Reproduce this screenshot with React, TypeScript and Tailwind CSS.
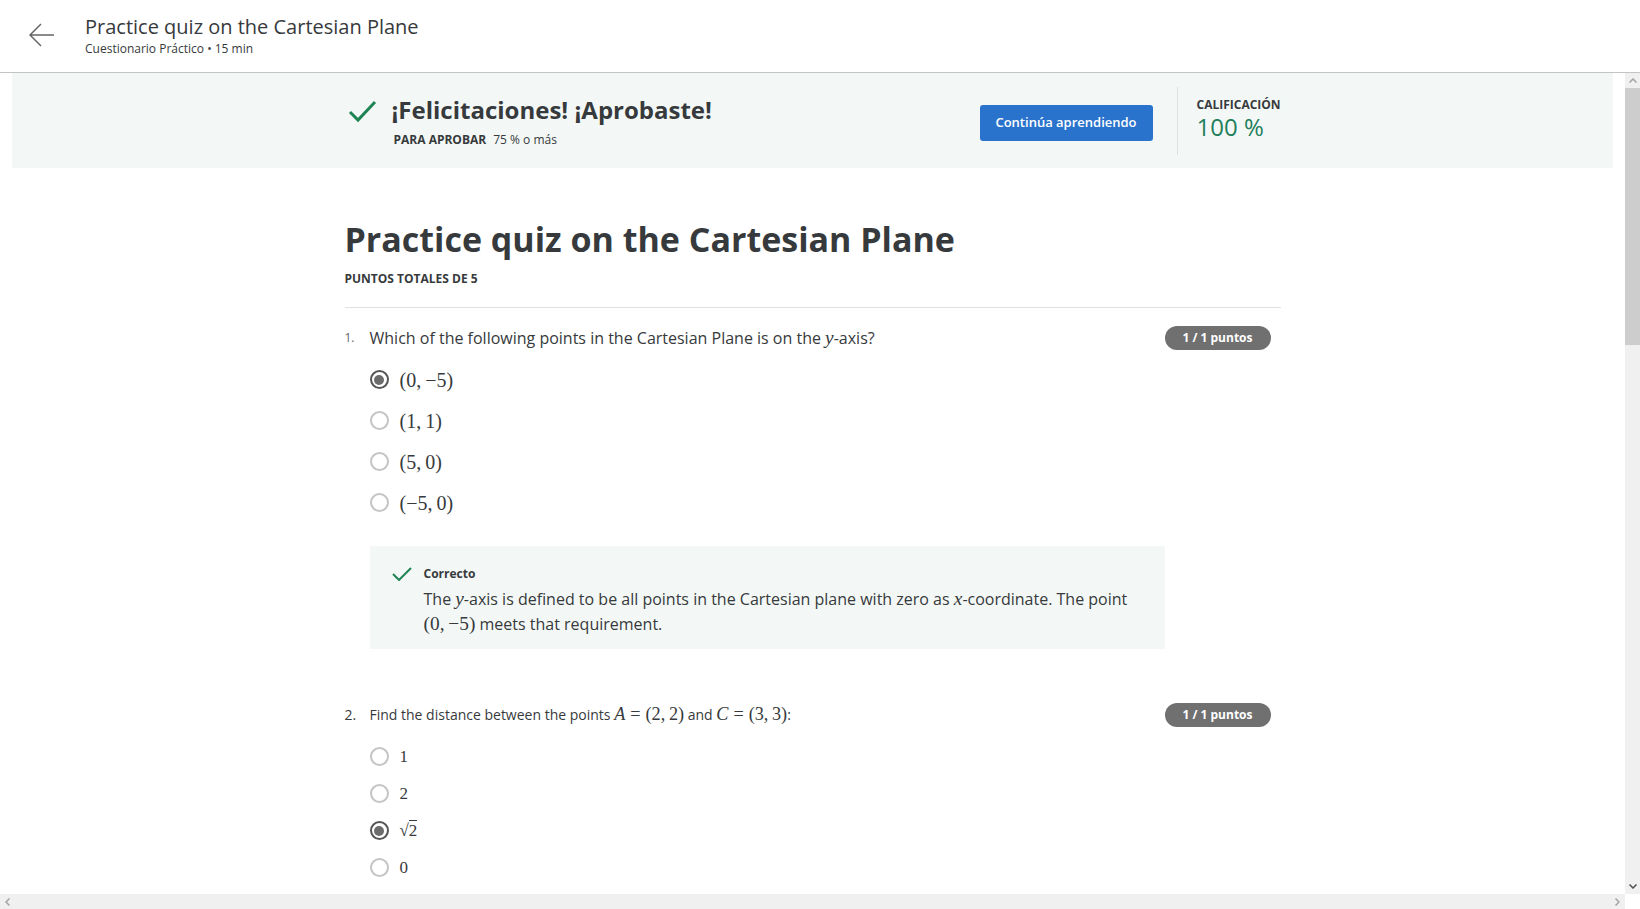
import React from 'react';

const serif = "font-['Liberation_Serif','Times_New_Roman',serif]";

function M({ children, big }: { children: React.ReactNode; big?: boolean }) {
  return <span className={`${serif} ${big ? 'text-[1.3em]' : 'text-[1.21em]'} leading-none`}>{children}</span>;
}

function Eq() {
  return <span className="mx-[5px]">=</span>;
}

function Check({ className }: { className?: string }) {
  return (
    <svg viewBox="0 0 29 24" className={className} fill="none">
      <polyline points="2,13 10,21 27,3" stroke="#1f8354" strokeWidth="3" />
    </svg>
  );
}

function Radio({ checked }: { checked?: boolean }) {
  if (checked) {
    return (
      <span className="w-[19px] h-[19px] rounded-full border-2 border-[#555] flex items-center justify-center shrink-0">
        <span className="w-[10px] h-[10px] rounded-full bg-[#6b6b6b]" />
      </span>
    );
  }
  return <span className="w-[19px] h-[19px] rounded-full border-2 border-[#c4c4c4] shrink-0" />;
}

function Badge() {
  return (
    <div className="w-[106px] h-6 rounded-full bg-[#707070] text-white text-[12px] font-bold flex items-center justify-center mr-[10px] shrink-0">
      1 / 1 puntos
    </div>
  );
}

export default function App() {
  const q1 = [
    { t: <>(0,&thinsp;−5)</>, c: true },
    { t: <>(1,&thinsp;1)</> },
    { t: <>(5,&thinsp;0)</> },
    { t: <>(−5,&thinsp;0)</> },
  ];
  const q2 = [
    { t: <>1</> },
    { t: <>2</> },
    { t: <>√<span className="border-t border-current">2</span></>, c: true },
    { t: <>0</> },
  ];

  return (
    <div className="w-[1640px] h-[909px] overflow-hidden bg-white flex flex-col font-['Open_Sans',sans-serif] text-[#373a3c]">
      <header className="h-[73px] shrink-0 border-b border-[#c4c4c4] flex items-start">
        <div className="pl-[29px] pt-[23px]">
          <svg viewBox="0 0 25 24" className="w-[25px] h-6" fill="none">
            <path d="M1 12H25M12 1L1 12L12 23" stroke="#666" strokeWidth="1.5" />
          </svg>
        </div>
        <div className="ml-[31px] pt-[14px]">
          <h1 className="text-[20px] leading-[26px]">Practice quiz on the Cartesian Plane</h1>
          <p className="text-[12px] leading-4 mt-px">Cuestionario Práctico • 15 min</p>
        </div>
      </header>

      <div className="flex flex-1 min-h-0">
        <main className="flex-1 min-w-0 overflow-hidden">
          <div className="mx-3 h-[95px] bg-[#f3f8f6]">
            <div className="w-[936px] mx-auto h-full flex items-center">
              <div className="flex-1 flex items-start">
                <Check className="w-[29px] h-6 ml-[3px] mt-[5px]" />
                <div className="ml-[15px]">
                  <div className="text-[24px] leading-8 font-bold">¡Felicitaciones! ¡Aprobaste!</div>
                  <div className="mt-1.5 ml-[2px] text-[12px] leading-4">
                    <span className="font-bold">PARA APROBAR</span>
                    <span className="ml-[7px]">75 % o más</span>
                  </div>
                </div>
              </div>
              <button className="w-[173px] h-9 mt-1 rounded-[3px] bg-[#2a73cc] text-white text-[13px] font-semibold">
                Continúa aprendiendo
              </button>
              <div className="ml-6 w-px h-[68px] bg-[#e0e0e0]" />
              <div className="ml-[19px] w-[84px] mb-[4px]">
                <div className="text-[12px] leading-4 font-bold">CALIFICACIÓN</div>
                <div className="text-[24px] leading-7 text-[#1f7f5c]">100 %</div>
              </div>
            </div>
          </div>

          <div className="w-[936px] mx-auto">
            <h2 className="mt-[49px] text-[34px] leading-[44px] font-bold">Practice quiz on the Cartesian Plane</h2>
            <div className="mt-[10px] text-[12px] leading-4 font-bold">PUNTOS TOTALES DE 5</div>
            <div className="mt-[20px] border-t border-[#e1e1e1]" />

            <div className="pt-[18px] flex items-start">
              <div className="w-[25px] text-[12px] leading-6 text-[#666] shrink-0">1.</div>
              <div className="flex-1">
                <div className="text-[16px] leading-6">
                  Which of the following points in the Cartesian Plane is on the <M><i>y</i></M>-axis?
                </div>
                <div className="mt-[9px]">
                  {q1.map((o, i) => (
                    <div key={i} className="h-[41px] flex items-center">
                      <Radio checked={o.c} />
                      <span className={`ml-[11px] ${serif} text-[20px] leading-none`}>{o.t}</span>
                    </div>
                  ))}
                </div>
                <div className="mt-[23px] bg-[#f3f8f6] pt-5 pb-[12px] px-[22px] flex items-start">
                  <svg viewBox="0 0 20 14" className="w-5 h-[14px] mt-px shrink-0" fill="none">
                    <polyline points="1,7 7,13 19,1" stroke="#1f8354" strokeWidth="2" />
                  </svg>
                  <div className="ml-3">
                    <div className="text-[12px] leading-4 font-bold">Correcto</div>
                    <div className="mt-[5px] text-[16px] leading-[25px]">
                      The <M><i>y</i></M>-axis is defined to be all points in the Cartesian plane with zero as <M><i>x</i></M>-coordinate. The point
                      <br />
                      <M>(0,&thinsp;−5)</M> meets that requirement.
                    </div>
                  </div>
                </div>
              </div>
              <Badge />
            </div>

            <div className="mt-[54px] flex items-start">
              <div className="w-[25px] text-[14px] leading-6 shrink-0">2.</div>
              <div className="flex-1">
                <div className="text-[14px] leading-6">
                  Find the distance between the points <M big><i>A</i><Eq />(2,&thinsp;2)</M> and <M big><i>C</i><Eq />(3,&thinsp;3)</M>:
                </div>
                <div className="mt-[11px]">
                  {q2.map((o, i) => (
                    <div key={i} className="h-[37px] flex items-center">
                      <Radio checked={o.c} />
                      <span className={`ml-[11px] ${serif} text-[17px] leading-none`}>{o.t}</span>
                    </div>
                  ))}
                </div>
              </div>
              <Badge />
            </div>
          </div>
        </main>

        {/* vertical scrollbar */}
        <div className="w-[15px] bg-[#f0f0f0] flex flex-col shrink-0">
          <div className="h-[15px] flex items-center justify-center">
            <svg viewBox="0 0 8 5" className="w-2 h-[5px]"><polyline points="0.5,4.5 4,1 7.5,4.5" fill="none" stroke="#a3a3a3" strokeWidth="1.5" /></svg>
          </div>
          <div className="h-[257px] bg-[#cdcdcd]" />
          <div className="flex-1" />
          <div className="h-[15px] flex items-center justify-center">
            <svg viewBox="0 0 8 5" className="w-2 h-[5px]"><polyline points="0.5,0.5 4,4 7.5,0.5" fill="none" stroke="#505050" strokeWidth="1.5" /></svg>
          </div>
        </div>
      </div>

      {/* horizontal scrollbar */}
      <div className="h-[15px] flex shrink-0">
        <div className="flex-1 bg-[#f0f0f0] flex items-center justify-between px-[5px]">
          <svg viewBox="0 0 5 8" className="w-[5px] h-2"><polyline points="4.5,0.5 1,4 4.5,7.5" fill="none" stroke="#a3a3a3" strokeWidth="1.5" /></svg>
          <svg viewBox="0 0 5 8" className="w-[5px] h-2"><polyline points="0.5,0.5 4,4 0.5,7.5" fill="none" stroke="#a3a3a3" strokeWidth="1.5" /></svg>
        </div>
        <div className="w-[15px] bg-white" />
      </div>
    </div>
  );
}
